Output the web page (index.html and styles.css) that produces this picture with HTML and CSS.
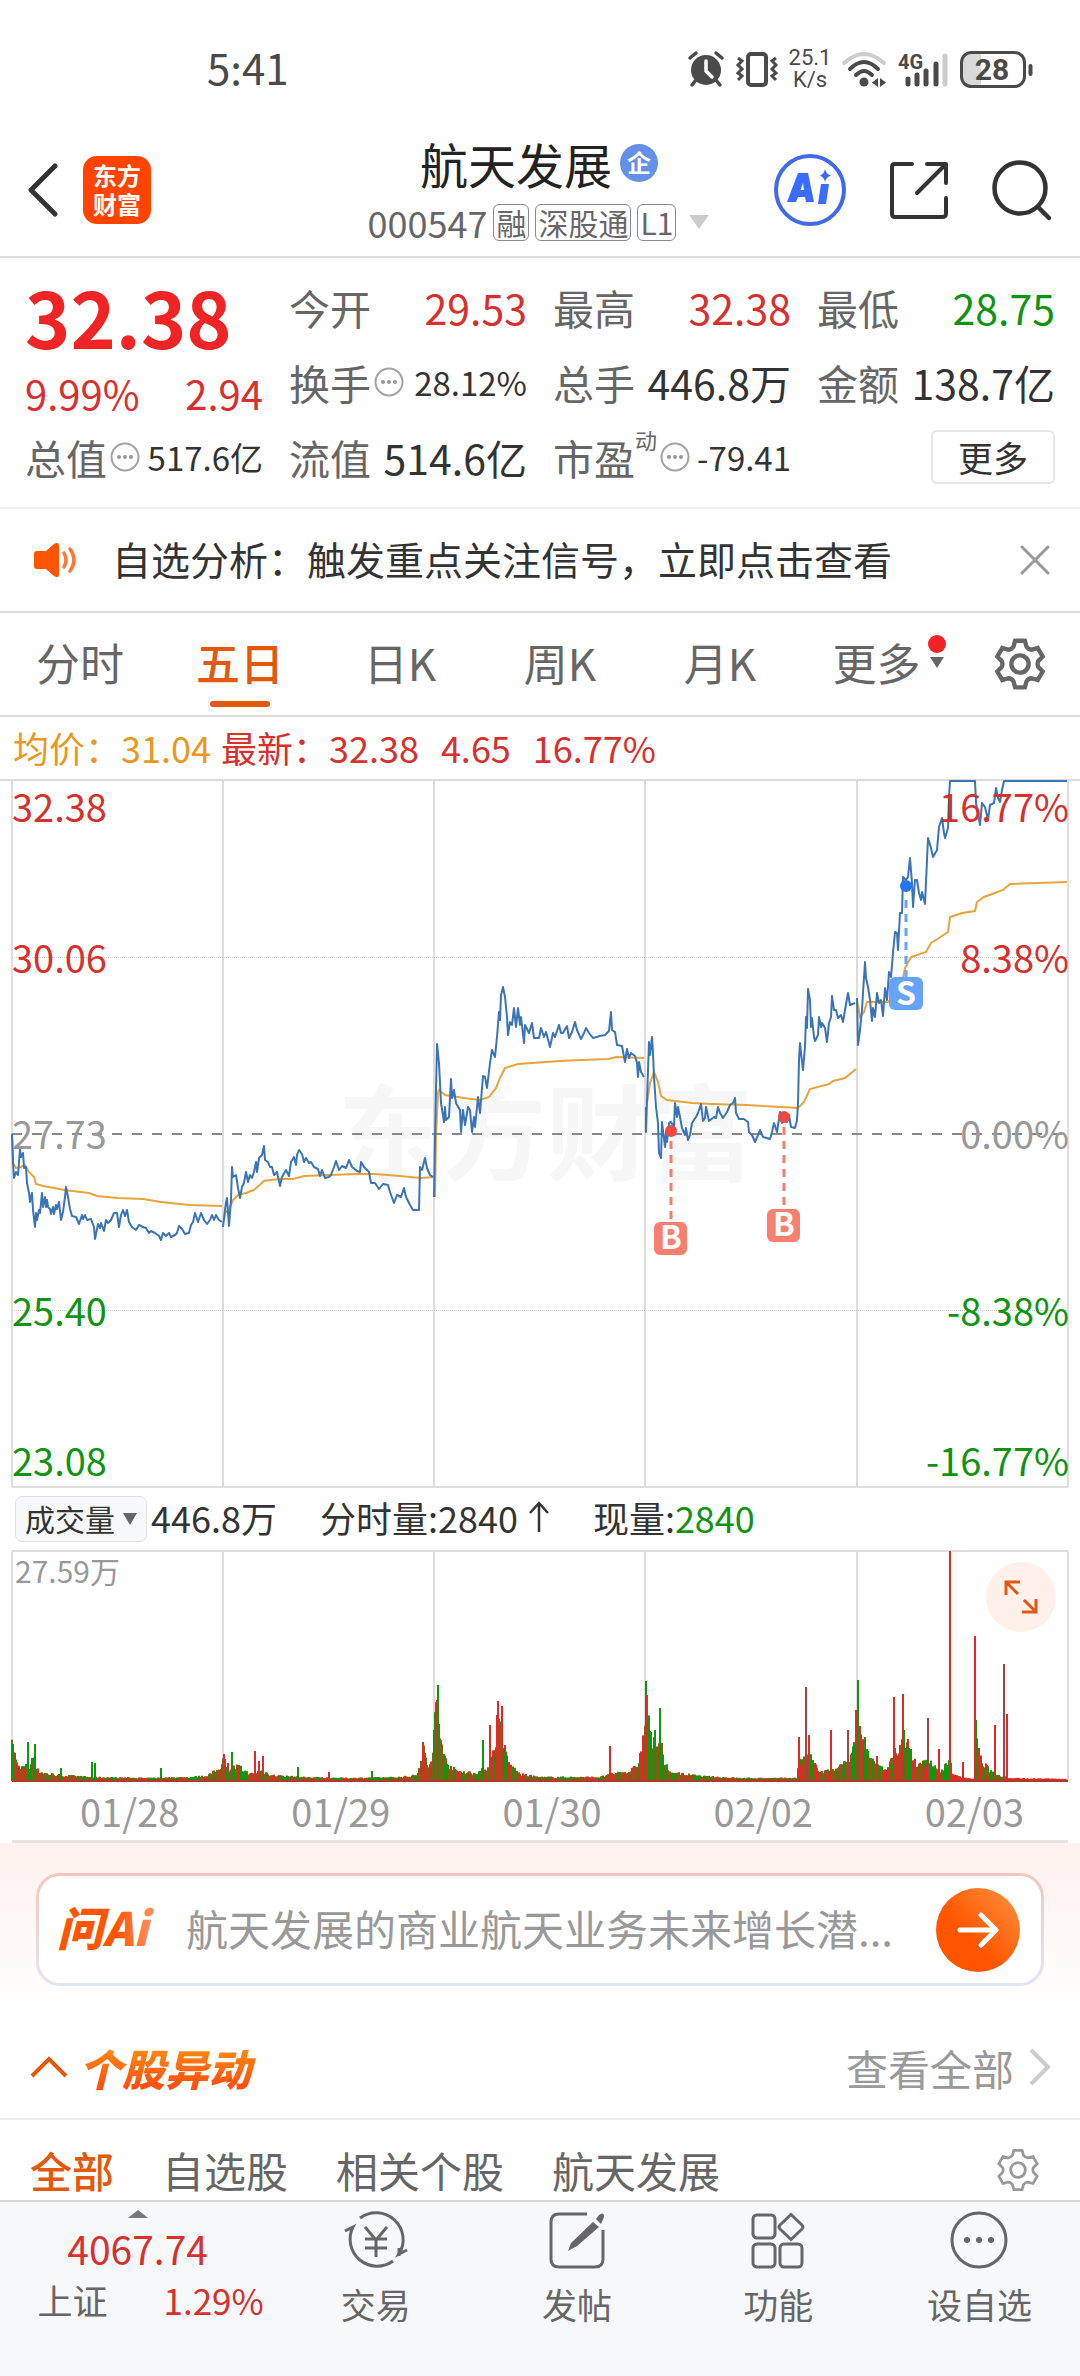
FILE: index.html
```html
<!DOCTYPE html>
<html lang="zh-CN">
<head>
  <meta charset="UTF-8">
  <meta name="viewport" content="width=device-width">
  <title>航天发展 000547</title>
  <link rel="stylesheet" href="styles.css">
</head>
<body>

  <svg class="symbols" aria-hidden="true">
    <symbol id="gear" viewBox="0 0 48 48">
      <path d="M19.5 2.5H28.5L30 8Q32 11 34.9 10.8L40.4 9.3L44.9 17.1L40.9 21.2Q39.5 24 40.9 26.8L44.9 30.9L40.4 38.7L34.9 37.2Q32 37 30 40L28.5 45.5H19.5L18 40Q16 37 13.1 37.2L7.6 38.7L3.1 30.9L7.1 26.8Q8.5 24 7.1 21.2L3.1 17.1L7.6 9.3L13.1 10.8Q16 11 18 8Z"/>
      <circle cx="24" cy="24" r="8"/>
    </symbol>
    <symbol id="more" viewBox="0 0 30 30">
      <circle cx="15" cy="15" r="13.5" fill="none" stroke="#a3a3a3" stroke-width="2"/>
      <g fill="#999"><circle cx="9" cy="15" r="2"/><circle cx="15" cy="15" r="2"/><circle cx="21" cy="15" r="2"/></g>
    </symbol>
  </svg>

  <div class="status">
    <span class="clock">5:41</span>
    <div class="status-icons">
      <svg width="36" height="36" viewBox="0 0 36 36">
        <circle cx="18" cy="19" r="15" fill="#4a4a4a"/>
        <path d="M2 7L8 2M34 7L28 2M8 29L4 34M28 29L32 34" stroke="#4a4a4a" stroke-width="3.5" stroke-linecap="round"/>
        <path d="M18 10V20L24 26" fill="none" stroke="#fff" stroke-width="3.5" stroke-linecap="round"/>
      </svg>
      <svg width="42" height="36" viewBox="0 0 42 36" fill="none" stroke="#4a4a4a">
        <rect x="12" y="3" width="18" height="31" rx="3" stroke-width="4"/>
        <path d="M2 7L6 10L2 14L6 18L2 22L6 25L2 29M40 7L36 10L40 14L36 18L40 22L36 25L40 29" stroke-width="3"/>
      </svg>
      <div class="speed"><span>25.1</span><span>K/s</span></div>
      <svg width="44" height="36" viewBox="0 0 44 36" fill="none" stroke="#4a4a4a" stroke-width="4" stroke-linecap="round">
        <path d="M2 12Q22 -6 42 12" stroke="#ccc"/>
        <path d="M8 18Q22 4 36 18M14 24Q22 16 30 24"/>
        <circle cx="22" cy="31" r="4.5" fill="#4a4a4a" stroke="none"/>
        <path d="M36 27V36L30 31.5ZM38 27V36L44 31.5Z" fill="#4a4a4a" stroke="none"/>
      </svg>
      <svg width="50" height="36" viewBox="0 0 50 36">
        <text x="0" y="18" class="net">4G</text>
        <path d="M10 28V33M19 24V33M28 20V33M38 13V33" stroke="#4a4a4a" stroke-width="5" stroke-linecap="round"/>
        <path d="M47 5V33" stroke="#ccc" stroke-width="5" stroke-linecap="round"/>
      </svg>
      <svg width="73" height="37" viewBox="0 0 73 37">
        <path d="M12 2H21V35H12Q2 35 2 25V12Q2 2 12 2Z" fill="#d9d9d9"/>
        <rect x="1.5" y="1.5" width="63" height="34" rx="10" fill="none" stroke="#4a4a4a" stroke-width="3"/>
        <path d="M70.5 15V23" stroke="#4a4a4a" stroke-width="4" stroke-linecap="round"/>
        <text x="32" y="29" class="battery">28</text>
      </svg>
    </div>
  </div>

  <header class="header">
    <div class="header-left">
      <button class="icon-btn" aria-label="返回">
        <svg width="34" height="56" viewBox="0 0 34 56"><path d="M29 4L5 28L29 52" fill="none" stroke="#333" stroke-width="5" stroke-linecap="round" stroke-linejoin="round"/></svg>
      </button>
      <a class="logo" href="#">东方<br>财富</a>
    </div>
    <div class="header-title">
      <h1>航天发展 <span class="badge">企</span></h1>
      <div class="code">000547 <span class="tag">融</span><span class="tag">深股通</span><span class="tag">L1</span>
        <svg width="22" height="15" viewBox="0 0 22 15"><path d="M1 0H21L11 14Z" fill="#ccc"/></svg>
      </div>
    </div>
    <div class="header-right">
      <button class="icon-btn" aria-label="Ai">
        <svg width="72" height="72" viewBox="0 0 72 72">
          <circle cx="36" cy="36" r="34" fill="none" stroke="#4169e8" stroke-width="4"/>
          <path d="M13 48L24 19H34L40 48H32L31 43H24L22 48ZM26.5 36H30L29 29Z" fill="#3b6bff"/>
          <path d="M47 30H55L52 50H44ZM51 15Q52 20 57 21.5Q52 23 51 28Q50 23 46 21.5Q50 20 51 15Z" fill="#3b6bff"/>
        </svg>
      </button>
      <button class="icon-btn" aria-label="分享">
        <svg width="58" height="58" viewBox="0 0 58 58" fill="none" stroke="#333" stroke-width="4" stroke-linecap="round" stroke-linejoin="round">
          <path d="M22 3H5Q2 3 2 6V53Q2 56 5 56H52Q56 56 56 53V37M37 3H56V22M54 5L27 32"/>
        </svg>
      </button>
      <button class="icon-btn" aria-label="搜索">
        <svg width="60" height="60" viewBox="0 0 60 60" fill="none" stroke="#333" stroke-width="4.5" stroke-linecap="round">
          <circle cx="28" cy="28" r="25.5"/><path d="M47 48L57 58"/>
        </svg>
      </button>
    </div>
  </header>

  <section class="quote">
    <div class="quote-price">
      <div class="price">32.38</div>
      <div class="change"><span>9.99%</span><span>2.94</span></div>
    </div>
    <div class="cell"><span class="name">今开</span><span class="val up">29.53</span></div>
    <div class="cell"><span class="name">最高</span><span class="val up">32.38</span></div>
    <div class="cell"><span class="name">最低</span><span class="val down">28.75</span></div>
    <div class="cell"><span class="name">换手<svg class="info"><use href="#more"/></svg></span><span class="val small">28.12%</span></div>
    <div class="cell"><span class="name">总手</span><span class="val">446.8万</span></div>
    <div class="cell"><span class="name">金额</span><span class="val">138.7亿</span></div>
    <div class="cell"><span class="name">总值<svg class="info"><use href="#more"/></svg></span><span class="val small">517.6亿</span></div>
    <div class="cell"><span class="name">流值</span><span class="val">514.6亿</span></div>
    <div class="cell"><span class="name">市盈<sup>动</sup><svg class="info"><use href="#more"/></svg></span><span class="val small">-79.41</span></div>
    <div class="cell"><button class="more-btn">更多</button></div>
  </section>

  <div class="notice">
    <svg width="46" height="36" viewBox="0 0 46 36">
      <path d="M3 9H12L20 2Q25 -1 25 4V32Q25 37 20 34L12 27H3Q0 27 0 24V12Q0 9 3 9Z" fill="#ff5500"/>
      <path d="M30 11Q34 18 30 25M36 7Q44 18 36 29" fill="none" stroke="#ff7733" stroke-width="3.5" stroke-linecap="round"/>
    </svg>
    <span class="notice-text">自选分析：触发重点关注信号，立即点击查看</span>
    <button class="icon-btn" aria-label="关闭">
      <svg width="30" height="30" viewBox="0 0 30 30"><path d="M2 2L28 28M28 2L2 28" stroke="#999" stroke-width="3" stroke-linecap="round"/></svg>
    </button>
  </div>

  <nav class="tabs">
    <button>分时</button>
    <button class="active">五日</button>
    <button>日K</button>
    <button>周K</button>
    <button>月K</button>
    <button class="has-dot">更多<svg width="14" height="11" viewBox="0 0 14 11"><path d="M0 0H14L7 11Z" fill="#666"/></svg></button>
    <button class="set" aria-label="设置"><svg class="gear" width="52" height="52"><use href="#gear"/></svg></button>
  </nav>

  <div class="legend">
    <span class="avg">均价：31.04</span>
    <span class="last">最新：<span>32.38</span><span>4.65</span><span>16.77%</span></span>
  </div>

  <svg class="chart" viewBox="0 0 1080 709">
    <text class="watermark" x="338" y="394">东方财富</text>
    <path class="grid" d="M0 1H1080M223 1V708M434 1V708M645 1V708M857 1V708"/>
    <path class="frame" d="M12 1V708H1068V1"/>
    <path class="dots" d="M12 178.5H1068M12 531.5H1068"/>
    <g id="avgLines" class="avg-line"></g>
    <path class="zero" d="M12 355H1068"/>
    <g id="priceLines" class="price-line"></g>
    <g class="buy">
      <circle cx="671" cy="352" r="6"/><path d="M671 362V440"/><rect x="654" y="443" width="33" height="33" rx="6"/><text x="671" y="470">B</text>
      <circle cx="784" cy="338" r="6"/><path d="M784 348V428"/><rect x="767" y="430" width="33" height="33" rx="6"/><text x="784" y="457">B</text>
    </g>
    <g class="sell">
      <circle cx="906" cy="107" r="6"/><path d="M906 121V198"/><rect x="889" y="198" width="34" height="33" rx="6"/><text x="906" y="226">S</text>
    </g>
    <g class="axis">
      <text class="up" x="12" y="43">32.38</text>
      <text class="up" x="12" y="194">30.06</text>
      <text class="flat" x="12" y="370">27.73</text>
      <text class="down" x="12" y="547">25.40</text>
      <text class="down" x="12" y="697">23.08</text>
    </g>
    <g class="axis right">
      <text class="up" x="1069" y="43">16.77%</text>
      <text class="up" x="1069" y="194">8.38%</text>
      <text class="flat" x="1069" y="370">0.00%</text>
      <text class="down" x="1069" y="547">-8.38%</text>
      <text class="down" x="1069" y="697">-16.77%</text>
    </g>
  </svg>

  <div class="vol-bar">
    <div class="vol-select">
      <select aria-label="指标"><option>成交量</option></select>
      <svg width="14" height="12" viewBox="0 0 14 12"><path d="M0 0H14L7 12Z" fill="#666"/></svg>
    </div>
    <span>446.8万</span>
    <span class="vol-item">分时量:2840<svg width="22" height="32" viewBox="0 0 22 32"><path d="M11 31V3M2 12L11 2L20 12" fill="none" stroke="#333" stroke-width="2.5"/></svg></span>
    <span class="vol-item">现量:<b class="down">2840</b></span>
  </div>

  <div class="volume">
    <svg class="chart" viewBox="0 0 1080 232">
      <path class="grid" d="M12 1H1068M223 1V231M434 1V231M645 1V231M857 1V231"/>
      <path class="frame" d="M12 1V231M1068 1V231"/>
      <g id="bars"></g>
      <text class="vol-max" x="15" y="33">27.59万</text>
    </svg>
    <button class="expand" aria-label="全屏">
      <svg width="34" height="34" viewBox="0 0 34 34" fill="none" stroke="#dd5a14" stroke-width="3"><path d="M2 15V2H16M3 3L14 14M32 19V32H18M31 31L20 20"/></svg>
    </button>
  </div>

  <div class="dates">
    <span>01/28</span><span>01/29</span><span>01/30</span><span>02/02</span><span>02/03</span>
  </div>

  <section class="ask">
    <form class="ask-box">
      <svg width="98" height="60" viewBox="0 0 98 60">
        <defs><linearGradient id="askFill"><stop offset="0.6" stop-color="#ff5500"/><stop offset="1" stop-color="#ff9466"/></linearGradient></defs>
        <text x="0" y="46" class="ask-logo">问Ai</text>
      </svg>
      <input type="text" aria-label="提问" placeholder="航天发展的商业航天业务未来增长潜...">
      <button type="button" class="send" aria-label="发送">
        <svg width="42" height="38" viewBox="0 0 42 38"><path d="M3 19H38M24 4L39 19L24 34" fill="none" stroke="#fff" stroke-width="5" stroke-linecap="round" stroke-linejoin="round"/></svg>
      </button>
    </form>
  </section>

  <div class="moves-head">
    <svg width="38" height="22" viewBox="0 0 38 22"><path d="M2 20L19 3L36 20" fill="none" stroke="#e2590c" stroke-width="4"/></svg>
    <h2>个股异动</h2>
    <a href="#">查看全部<svg width="22" height="38" viewBox="0 0 22 38"><path d="M2 2L19 19L2 36" fill="none" stroke="#ccc" stroke-width="4"/></svg></a>
  </div>

  <nav class="moves-tabs">
    <button class="active">全部</button>
    <button>自选股</button>
    <button>相关个股</button>
    <button>航天发展</button>
    <button class="set" aria-label="设置"><svg class="gear light" width="44" height="44"><use href="#gear"/></svg></button>
  </nav>

  <nav class="bottom">
    <a class="index" href="#">
      <svg width="20" height="8" viewBox="0 0 20 8"><path d="M0 8H20L10 0Z" fill="#777"/></svg>
      <span class="index-val">4067.74</span>
      <span class="index-row"><span class="index-name">上证</span><span>1.29%</span></span>
    </a>
    <a href="#">
      <svg width="66" height="60" viewBox="0 0 66 60" fill="none" stroke="#666" stroke-width="3">
        <path d="M17 8A27 27 0 0 1 56 44L64 40M50 51A27 27 0 0 1 10 17L2 21"/>
        <path d="M56 46V38M22 17L33 30L44 17M22 29H44M22 38H44M33 29V47"/>
      </svg>
      交易
    </a>
    <a href="#">
      <svg width="60" height="60" viewBox="0 0 60 60">
        <path d="M40 4H12Q4 4 4 12V49Q4 57 12 57H48Q56 57 56 49V20" fill="none" stroke="#666" stroke-width="3"/>
        <path d="M46 12L52 17L30 36L21 41L24 33ZM49 9L52 5Q57 1 57 7L54 14Z" fill="#666"/>
      </svg>
      发帖
    </a>
    <a href="#">
      <svg width="60" height="60" viewBox="0 0 60 60" fill="none" stroke="#666" stroke-width="3">
        <rect x="5" y="5" width="22" height="23" rx="4"/><rect x="5" y="34" width="22" height="23" rx="4"/><rect x="32" y="34" width="22" height="23" rx="4"/>
        <path d="M43 4.5L54 15Q56 17 54 19L43 29.5L32 19Q30 17 32 15Z"/>
      </svg>
      功能
    </a>
    <a href="#">
      <svg width="60" height="60" viewBox="0 0 60 60">
        <circle cx="30" cy="30" r="27" fill="none" stroke="#666" stroke-width="3"/>
        <g fill="#666"><circle cx="18" cy="30" r="3"/><circle cx="30" cy="30" r="3"/><circle cx="42" cy="30" r="3"/></g>
      </svg>
      设自选
    </a>
  </nav>

  <script src="chart.js"></script>
</body>
</html>
```

FILE: styles.css
```css
* {
  box-sizing: border-box;
}

body {
  margin: 0;
  min-height: 100vh;
  display: flex;
  flex-direction: column;
  background: #fff;
  color: #333;
  font-family: "Noto Sans CJK SC", sans-serif;
}

button, select, input {
  font: inherit;
  color: inherit;
  border: none;
  background: none;
  padding: 0;
  margin: 0;
}

a {
  color: inherit;
  text-decoration: none;
}

svg {
  display: block;
  flex-shrink: 0;
  overflow: visible;
}

.symbols {
  position: absolute;
  width: 0;
  height: 0;
}

.up { color: #d6302f; fill: #d6302f; }
.down { color: #109310; fill: #109310; }
.flat { fill: #999; }

/* status bar */
.status {
  display: flex;
  justify-content: space-between;
  align-items: center;
  height: 92px;
  padding: 46px 47px 0 207px;
  color: #4a4a4a;
}

.clock {
  padding-bottom: 4px;
  font-size: 42px;
  line-height: 40px;
}

.status-icons {
  display: flex;
  align-items: center;
  gap: 12px;
}

.speed {
  display: flex;
  flex-direction: column;
  align-items: center;
  width: 40px;
  font-family: Roboto, sans-serif;
  font-size: 22px;
  line-height: 22px;
}

.net {
  font: bold 20px Roboto, sans-serif;
  fill: #4a4a4a;
}

.battery {
  font: bold 30px Roboto, sans-serif;
  fill: #4a4a4a;
  text-anchor: middle;
}

/* header */
.header {
  display: grid;
  grid-template-columns: 1fr auto 1fr;
  align-items: center;
  padding: 42px 28px 10px 26px;
  border-bottom: 2px solid #ddd;
}

.header-left {
  display: flex;
  align-items: center;
  gap: 23px;
}

.logo {
  width: 68px;
  height: 68px;
  padding-top: 4px;
  border-radius: 14px;
  background: #ff4400;
  color: #fff;
  font-size: 24px;
  font-weight: bold;
  line-height: 29px;
  text-align: center;
}

.header-title h1 {
  display: flex;
  justify-content: center;
  align-items: center;
  gap: 8px;
  margin: 0 0 6px;
  font-size: 48px;
  font-weight: normal;
  line-height: 58px;
  color: #222;
}

.badge {
  width: 38px;
  height: 38px;
  border-radius: 50%;
  background: #6490e8;
  color: #fff;
  font-size: 24px;
  font-weight: bold;
  line-height: 36px;
  text-align: center;
}

.code {
  display: flex;
  align-items: center;
  gap: 6px;
  font-size: 36px;
  line-height: 48px;
  color: #666;
}

.code svg {
  margin-left: 6px;
}

.tag {
  padding: 0 2px;
  border: 1px solid #888;
  border-radius: 6px;
  font-size: 30px;
  line-height: 35px;
}

.header-right {
  display: flex;
  justify-content: flex-end;
  align-items: center;
  gap: 44px;
}

/* quote */
.quote {
  display: grid;
  grid-template-columns: repeat(4, 1fr);
  grid-auto-rows: 75px;
  column-gap: 26px;
  padding: 11px 25px 13px;
  border-bottom: 2px solid #eee;
}

.quote-price {
  grid-row: span 2;
}

.price {
  font-size: 77px;
  font-weight: bold;
  line-height: 94px;
  color: #f02424;
}

.change {
  display: flex;
  justify-content: space-between;
  font-size: 40px;
  line-height: 60px;
  color: #d6302f;
}

.cell {
  display: flex;
  justify-content: space-between;
  align-items: center;
  line-height: 60px;
  white-space: nowrap;
}

.name {
  display: flex;
  align-items: center;
  font-size: 41px;
  color: #666;
}

.name sup {
  align-self: flex-start;
  font-size: 22px;
  line-height: 24px;
}

.info {
  width: 30px;
  height: 30px;
  margin-left: 3px;
}

.val {
  font-size: 41px;
}

.val.small {
  font-size: 33px;
}

.more-btn {
  width: 124px;
  margin-left: auto;
  border: 2px solid #e6e6e6;
  border-radius: 6px;
  font-size: 35px;
  line-height: 50px;
}

/* notice */
.notice {
  display: flex;
  align-items: center;
  height: 104px;
  padding: 0 30px 0 34px;
  border-bottom: 2px solid #ddd;
}

.notice-text {
  flex: 1;
  padding: 0 0 4px 32px;
  font-size: 39px;
  line-height: 60px;
}

/* period tabs */
.tabs {
  display: grid;
  grid-template-columns: repeat(6, 4fr) 3fr;
  height: 104px;
  border-bottom: 2px solid #ddd;
}

.tabs button {
  position: relative;
  display: flex;
  justify-content: center;
  align-items: center;
  padding-bottom: 4px;
  font-size: 44px;
  color: #666;
}

.tabs .set {
  padding-bottom: 0;
}

.tabs .active {
  color: #e2590c;
  font-weight: 500;
}

.tabs .active::after {
  content: "";
  position: absolute;
  bottom: 8px;
  width: 60px;
  height: 6px;
  border-radius: 3px;
  background: #e2590c;
}

.tabs .has-dot {
  gap: 9px;
  padding-left: 16px;
}

.has-dot::after {
  content: "";
  position: absolute;
  top: 22px;
  right: 14px;
  width: 18px;
  height: 18px;
  border-radius: 50%;
  background: #f02424;
}

.gear {
  fill: none;
  stroke: #666;
  stroke-width: 4px;
}

.gear.light {
  stroke: #999;
  stroke-width: 3px;
}

/* chart */
.legend {
  display: flex;
  gap: 10px;
  padding: 0 13px 2px;
  font-size: 36px;
  line-height: 60px;
}

.legend .avg {
  color: #e8981e;
}

.legend .last {
  display: flex;
  gap: 22px;
  color: #d6302f;
}

.legend .last span:first-child {
  margin-left: -22px;
}

.chart {
  width: 100%;
  height: auto;
}

.grid {
  fill: none;
  stroke: #dcdcdc;
  stroke-width: 2px;
}

.frame {
  fill: none;
  stroke: #dedede;
  stroke-width: 2px;
}

.dots {
  stroke: #ccc;
  stroke-width: 1px;
  stroke-dasharray: 1 1;
}

.zero {
  stroke: #888;
  stroke-width: 2px;
  stroke-dasharray: 10 10;
}

.watermark {
  font-size: 104px;
  font-weight: bold;
  fill: #f7f7f7;
}

.price-line {
  fill: none;
  stroke: #3a74b6;
  stroke-width: 2px;
  stroke-linejoin: round;
}

.avg-line {
  fill: none;
  stroke: #e8a33d;
  stroke-width: 2px;
}

.buy circle { fill: #ee4a42; }
.buy rect { fill: #f97f71; }
.buy path { stroke: #ee7f72; }
.sell circle { fill: #2277ee; }
.sell rect { fill: #66a3fa; }
.sell path { stroke: #66a3fa; }

.buy path, .sell path {
  stroke-width: 3px;
  stroke-dasharray: 8 6;
}

.buy text, .sell text {
  font-size: 32px;
  font-weight: bold;
  fill: #fff;
  text-anchor: middle;
}

.axis {
  font-size: 38px;
}

.axis.right {
  text-anchor: end;
}

/* volume */
.vol-bar {
  display: flex;
  align-items: center;
  gap: 4px;
  height: 62px;
  padding: 0 15px;
  font-size: 36px;
  line-height: 52px;
}

.vol-bar > span {
  padding-bottom: 4px;
}

.vol-bar b {
  font-weight: normal;
}

.vol-select {
  display: flex;
  align-items: center;
  width: 132px;
  height: 46px;
  padding: 0 9px;
  border: 1px solid #e0e2e6;
  border-radius: 7px;
  background: #f7f8fa;
}

.vol-select select {
  flex: 1;
  appearance: none;
  padding-bottom: 3px;
  font-size: 30px;
  line-height: 42px;
}

.vol-item {
  display: flex;
  align-items: center;
  gap: 10px;
  margin-left: 39px;
}

.vol-item b {
  margin-left: -10px;
}

.volume {
  position: relative;
}

.vol-max {
  font-size: 30px;
  fill: #999;
}

.expand {
  position: absolute;
  top: 12px;
  right: 24px;
  display: flex;
  justify-content: center;
  align-items: center;
  width: 70px;
  height: 70px;
  border-radius: 50%;
  background: #fff1ea;
}

.dates {
  display: flex;
  margin: 0 12px;
  border-bottom: 3px solid #e6e4e4;
  font-size: 38px;
  line-height: 58px;
  color: #999;
}

.dates span {
  flex: 1;
  padding-left: 24px;
  text-align: center;
}

/* ask */
.ask {
  padding: 30px 36px;
  background: linear-gradient(#fff2ee, #fff);
}

.ask-box {
  display: flex;
  align-items: center;
  height: 113px;
  padding: 0 21px 0 18px;
  border: 3px solid transparent;
  border-radius: 24px;
  background: linear-gradient(#fff, #fff) padding-box, linear-gradient(#f5c6be, #dfe7f4) border-box;
}

.ask-logo {
  font-size: 46px;
  font-style: italic;
  font-weight: 900;
  fill: url(#askFill);
}

.ask-box input {
  flex: 1;
  min-width: 0;
  padding: 0 0 4px 31px;
  font-size: 42px;
  line-height: 60px;
}

.ask-box input::placeholder {
  color: #999;
}

.send {
  display: flex;
  justify-content: center;
  align-items: center;
  width: 84px;
  height: 84px;
  border-radius: 50%;
  background: linear-gradient(45deg, #ff5500 40%, #ff9440);
}

/* moves */
.moves-head {
  display: flex;
  align-items: center;
  height: 104px;
  padding: 0 29px 0 30px;
  border-bottom: 2px solid #eee;
}

.moves-head h2 {
  flex: 1;
  margin: 0 0 0 11px;
  font-size: 43px;
  font-style: italic;
  font-weight: 900;
  line-height: 60px;
  background: linear-gradient(#ff8a10 20%, #ff5010 80%);
  background-clip: text;
  color: transparent;
}

.moves-head a {
  display: flex;
  align-items: center;
  gap: 15px;
  font-size: 42px;
  color: #999;
}

.moves-tabs {
  display: flex;
  align-items: center;
  gap: 48px;
  padding: 20px 40px 0 30px;
  font-size: 42px;
  line-height: 60px;
  color: #666;
}

.moves-tabs .active {
  color: #e2590c;
  font-weight: 500;
}

.moves-tabs .set {
  margin-left: auto;
}

/* bottom bar */
.bottom {
  flex: 1;
  display: grid;
  grid-template-columns: 275fr repeat(4, 201fr);
  border-top: 2px solid #d4d4d6;
  background: #f7f8fa;
}

.bottom a {
  display: flex;
  flex-direction: column;
  align-items: center;
  gap: 8px;
  padding-top: 8px;
  font-size: 35px;
  line-height: 52px;
  color: #666;
}

.bottom .index {
  gap: 0;
  color: #d6302f;
}

.index-val {
  font-size: 39px;
  line-height: 60px;
}

.index-row {
  display: flex;
  gap: 56px;
  margin-left: 26px;
  line-height: 44px;
}

.index-name {
  color: #666;
}
```

FILE: chart.js
```js
// x,y pairs, one string per trading day
const price = [
  "12,355 13,384 14,399 16,393 18,396 20,370 21,378 23,374 24,389 26,388 27,404 29,414 30,423 32,414 33,431 35,448 36,434 37,441 39,431 40,434 42,414 43,428 45,418 46,428 47,421 48,428 50,430 51,435 53,428 54,435 56,426 57,430 59,423 61,441 63,433 65,418 66,408 68,418 70,430 72,437 76,438 79,445 82,436 83,440 85,436 87,441 91,440 94,448 95,460 98,445 100,449 101,444 104,452 106,441 108,444 111,441 114,434 117,434 119,448 121,436 123,431 125,437 127,431 129,443 132,448 136,451 139,446 143,448 146,449 149,454 151,452 155,454 159,457 161,461 163,454 166,457 169,454 171,458 175,456 177,454 179,447 182,450 185,455 189,454 191,446 193,443 195,434 198,443 201,434 204,441 207,445 210,441 212,436 214,441 216,436 219,441 222,443",
  "223,448 225,431 226,423 227,419 229,447 231,421 232,388 233,398 236,396 238,409 240,419 242,408 244,404 246,393 248,403 250,396 252,399 254,393 256,383 257,393 259,379 262,376 264,367 265,381 268,383 270,388 272,388 274,396 277,393 280,407 282,398 286,391 289,397 291,383 294,378 296,386 297,376 299,371 302,375 304,383 306,379 309,384 311,383 314,388 318,390 320,397 322,391 325,399 329,398 331,396 334,388 336,382 339,391 342,387 346,389 349,381 352,388 357,392 360,393 361,383 364,388 369,393 371,404 375,404 379,410 383,405 388,406 390,413 394,424 397,416 401,418 404,409 406,418 410,426 413,431 419,431 420,388 422,391 425,379 427,389 430,396 433,398",
  "434,418 435,358 437,265 439,284 441,324 444,343 445,328 446,341 449,338 451,300 452,319 454,311 456,324 460,331 461,353 463,331 465,346 468,328 470,331 472,353 474,338 475,348 478,318 480,334 483,297 485,298 487,309 490,284 492,271 495,278 497,258 499,233 500,241 501,216 503,208 505,218 507,238 508,256 510,243 512,246 514,229 516,248 518,229 520,246 521,238 524,264 525,246 529,254 532,244 534,259 539,259 541,249 544,258 546,253 550,268 553,254 555,258 559,246 561,254 563,254 567,247 569,259 572,253 575,243 577,251 581,260 584,254 586,249 589,254 593,259 600,257 605,256 609,252 611,233 612,251 615,253 617,266 622,267 625,283 627,270 629,279 631,274 635,277 637,284 638,298 639,283 641,293 644,298",
  "646,328 646,353 648,291 649,263 650,276 652,258 653,274 654,298 656,328 658,344 659,374 661,379 662,343 665,368 666,353 667,363 669,344 671,343 674,348 675,324 677,338 678,328 680,338 682,349 685,356 686,349 688,361 690,356 692,344 696,338 698,334 701,325 703,342 705,339 706,328 709,342 714,338 716,339 718,328 720,334 723,339 727,333 730,326 733,324 735,319 736,334 739,340 744,340 748,343 749,353 752,356 755,363 758,356 760,351 763,358 770,360 772,353 774,344 777,353 780,333 782,344 784,338 787,343 789,336 791,348 795,349 797,341 798,324 799,281 800,264 801,274 803,291 805,268 806,238 807,249 808,210 810,221 811,248 812,239 814,258 815,262 818,256 819,238 821,248 822,244 825,249 827,263 829,244 831,238 832,217 834,231 836,231 838,239 841,236 843,243 845,231 848,214 850,226 855,224",
  "857,219 858,266 860,251 862,231 863,214 865,183 866,199 868,208 870,221 872,242 873,229 875,238 877,214 879,224 881,221 883,237 885,209 887,221 889,193 891,198 893,174 895,153 897,154 898,171 900,134 902,134 903,98 906,101 908,98 910,79 912,104 913,128 915,101 917,101 919,114 921,121 922,113 925,125 927,81 928,59 931,69 933,78 937,71 939,48 942,39 944,54 945,59 948,49 949,18 950,2 975,2 976,24 978,34 980,46 982,24 985,28 988,41 990,26 994,24 996,9 998,19 1000,23 1002,11 1004,2 1067,2"
];

const avg = [
  "12,355 13,384 16,389 21,388 25,386 29,393 34,398 36,405 43,407 54,409 64,411 89,414 97,417 118,419 143,420 161,423 189,426 222,427",
  "224,441 225,434 229,430 233,421 238,416 246,414 254,411 264,402 279,400 293,400 304,397 329,396 357,395 375,395 400,397 421,399 434,398",
  "435,418 436,358 438,314 439,311 445,316 464,319 480,321 489,318 496,309 500,299 505,289 518,285 560,282 581,281 609,280 616,278 644,279",
  "647,324 650,304 654,293 658,303 661,317 667,321 692,324 712,325 747,326 781,328 798,329 804,323 810,310 829,305 833,302 845,299 856,290",
  "857,221 860,238 864,233 867,223 888,223 893,218 902,204 905,189 911,178 926,173 931,164 939,159 948,153 950,138 962,134 975,132 977,123 984,118 995,114 1003,111 1010,105 1067,103"
];

// volume: general level along x, then the tall single bars
const level = [
  [12, 35], [14, 30], [17, 18], [20, 12], [25, 14], [30, 14], [34, 25], [38, 10], [45, 7], [60, 5], [90, 3], [150, 2], [190, 3],
  [205, 4], [218, 10], [223, 22], [230, 12], [238, 14], [250, 6], [262, 10], [272, 5], [300, 3], [350, 2], [400, 3], [417, 5],
  [419, 15], [424, 30], [428, 14], [432, 18], [434, 50], [437, 85], [440, 50], [445, 22], [455, 10], [475, 7], [490, 14],
  [495, 35], [500, 60], [505, 30], [508, 18], [520, 6], [540, 3], [600, 3], [620, 8], [630, 9], [638, 15], [645, 50], [647, 75],
  [650, 45], [655, 35], [660, 45], [664, 18], [670, 8], [700, 4], [740, 2], [797, 2], [799, 30], [803, 15], [806, 30], [812, 20],
  [820, 8], [835, 10], [850, 20], [857, 60], [862, 45], [870, 20], [885, 10], [895, 28], [898, 20], [904, 50], [910, 28],
  [918, 15], [928, 20], [940, 8], [950, 20], [953, 5], [972, 1], [974, 2], [976, 45], [982, 18], [990, 10], [1000, 5],
  [1010, 2], [1067, 1]
];

const RED = "#dd2c28", GREEN = "#0f960f", BROWN = "#8a5a14", DARK = "#a04444";

const spikes = [
  [13, 37, GREEN], [28, 39, GREEN], [35, 37, GREEN], [61, 13, GREEN], [92, 19, GREEN], [95, 18, GREEN], [161, 13, GREEN],
  [224, 27, RED], [232, 29, GREEN], [255, 30, RED], [259, 20, RED], [263, 25, RED], [298, 14, GREEN], [329, 9, RED],
  [372, 10, GREEN], [423, 39, RED], [436, 68, RED], [437, 81, RED], [438, 96, GREEN], [483, 41, GREEN], [490, 56, RED],
  [497, 66, RED], [498, 80, RED], [500, 57, BROWN], [502, 75, RED], [504, 32, GREEN], [610, 35, RED], [646, 100, GREEN],
  [647, 86, RED], [655, 51, GREEN], [660, 73, GREEN], [799, 44, RED], [806, 94, DARK], [809, 46, RED], [831, 51, RED],
  [848, 51, DARK], [856, 71, RED], [858, 101, GREEN], [860, 55, RED], [865, 44, GREEN], [877, 25, RED], [894, 84, RED],
  [903, 87, RED], [904, 51, GREEN], [928, 63, DARK], [939, 32, RED], [950, 230, RED], [963, 19, RED], [975, 145, RED],
  [976, 61, GREEN], [979, 33, RED], [995, 56, RED], [1004, 117, DARK], [1007, 67, RED]
];

function draw(id, html) {
  document.getElementById(id).innerHTML = html;
}

draw("priceLines", price.map(p => `<polyline points="${p}"/>`).join(""));
draw("avgLines", avg.map(p => `<polyline points="${p}"/>`).join(""));

let seed = 7;
function rand() {
  seed = (seed * 16807) % 2147483647;
  return seed / 2147483647;
}

function bar(x, h, color) {
  return `<rect x="${x - 1}" y="${(231 - h).toFixed(1)}" width="2" height="${h.toFixed(1)}" fill="${color}"/>`;
}

let out = "";
let i = 0;
for (let x = 12; x < 1067; x++) {
  while (level[i + 1][0] <= x) i++;
  const [x0, h0] = level[i];
  const [x1, h1] = level[i + 1];
  const base = h0 + (h1 - h0) * (x - x0) / (x1 - x0);
  const r = rand();
  let color = r < 0.4 ? BROWN : r < 0.7 ? RED : GREEN;
  if (x > 1010 || (x > 950 && x < 975)) color = RED;
  out += bar(x, base * (0.6 + rand() * 0.6) + 1, color);
}
for (const [x, h, color] of spikes) out += bar(x, h, color);
out += `<rect x="12" y="230" width="1056" height="2" fill="#b03a2a"/>`;
draw("bars", out);
```
